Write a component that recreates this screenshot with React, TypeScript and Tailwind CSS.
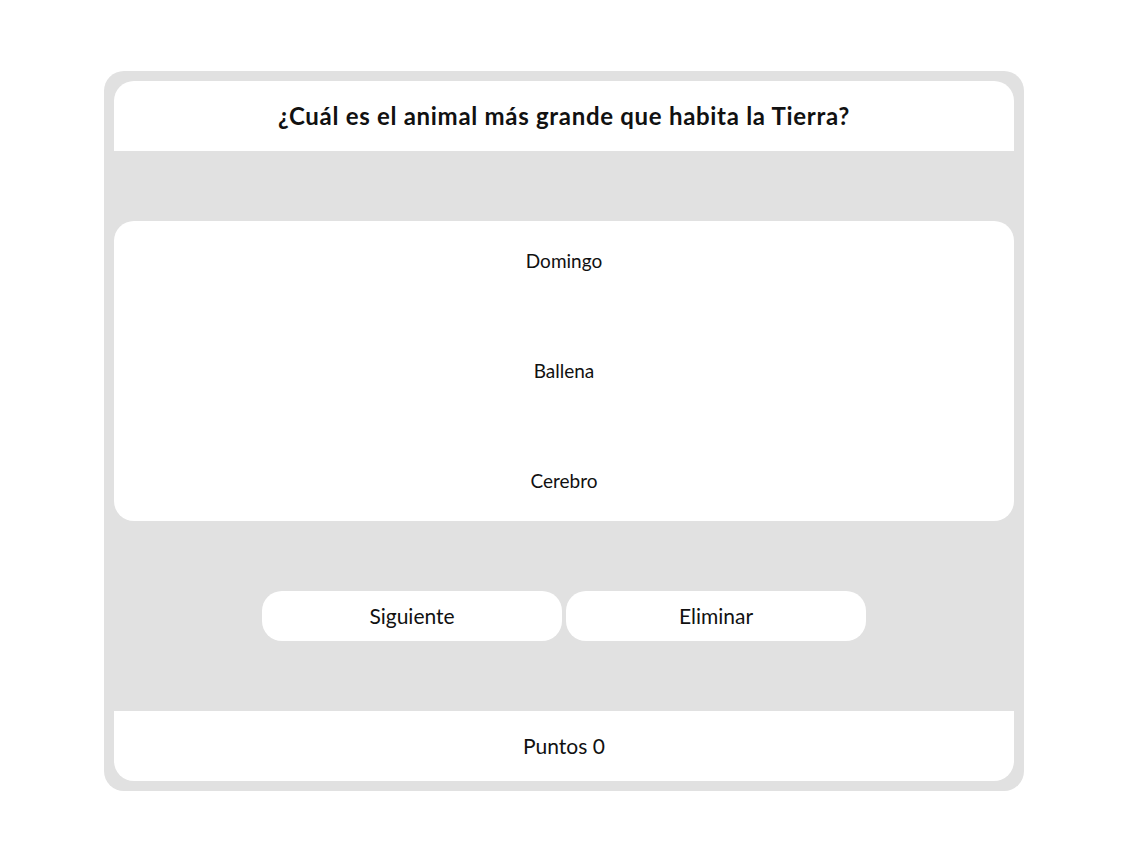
import React, { useState } from "react";

const OPTIONS = ["Domingo", "Ballena", "Cerebro"];

const App: React.FC = () => {
  const [points] = useState(0);

  return (
    <div className="min-h-screen bg-white pt-[71px] font-['Lato',sans-serif] text-[#111]">
      <div className="mx-auto w-[920px] rounded-[20px] bg-[#e1e1e1] p-[10px]">
        <header className="flex h-[70px] items-center justify-center rounded-t-[20px] bg-white">
          <h1 className="text-[24px] font-bold tracking-[0.7px]">
            ¿Cuál es el animal más grande que habita la Tierra?
          </h1>
        </header>

        <ul className="mt-[70px] flex flex-col gap-[30px] rounded-[20px] bg-white">
          {OPTIONS.map((opt) => (
            <li key={opt} className="flex h-[80px] items-center justify-center text-[19px]">
              {opt}
            </li>
          ))}
        </ul>

        <div className="my-[70px] flex justify-center gap-1">
          <button type="button" className="h-[50px] w-[300px] rounded-[20px] bg-white text-[21px]">
            Siguiente
          </button>
          <button type="button" className="h-[50px] w-[300px] rounded-[20px] bg-white text-[21px]">
            Eliminar
          </button>
        </div>

        <footer className="flex h-[70px] items-center justify-center rounded-b-[20px] bg-white text-[21px]">
          Puntos {points}
        </footer>
      </div>
    </div>
  );
};

export default App;
